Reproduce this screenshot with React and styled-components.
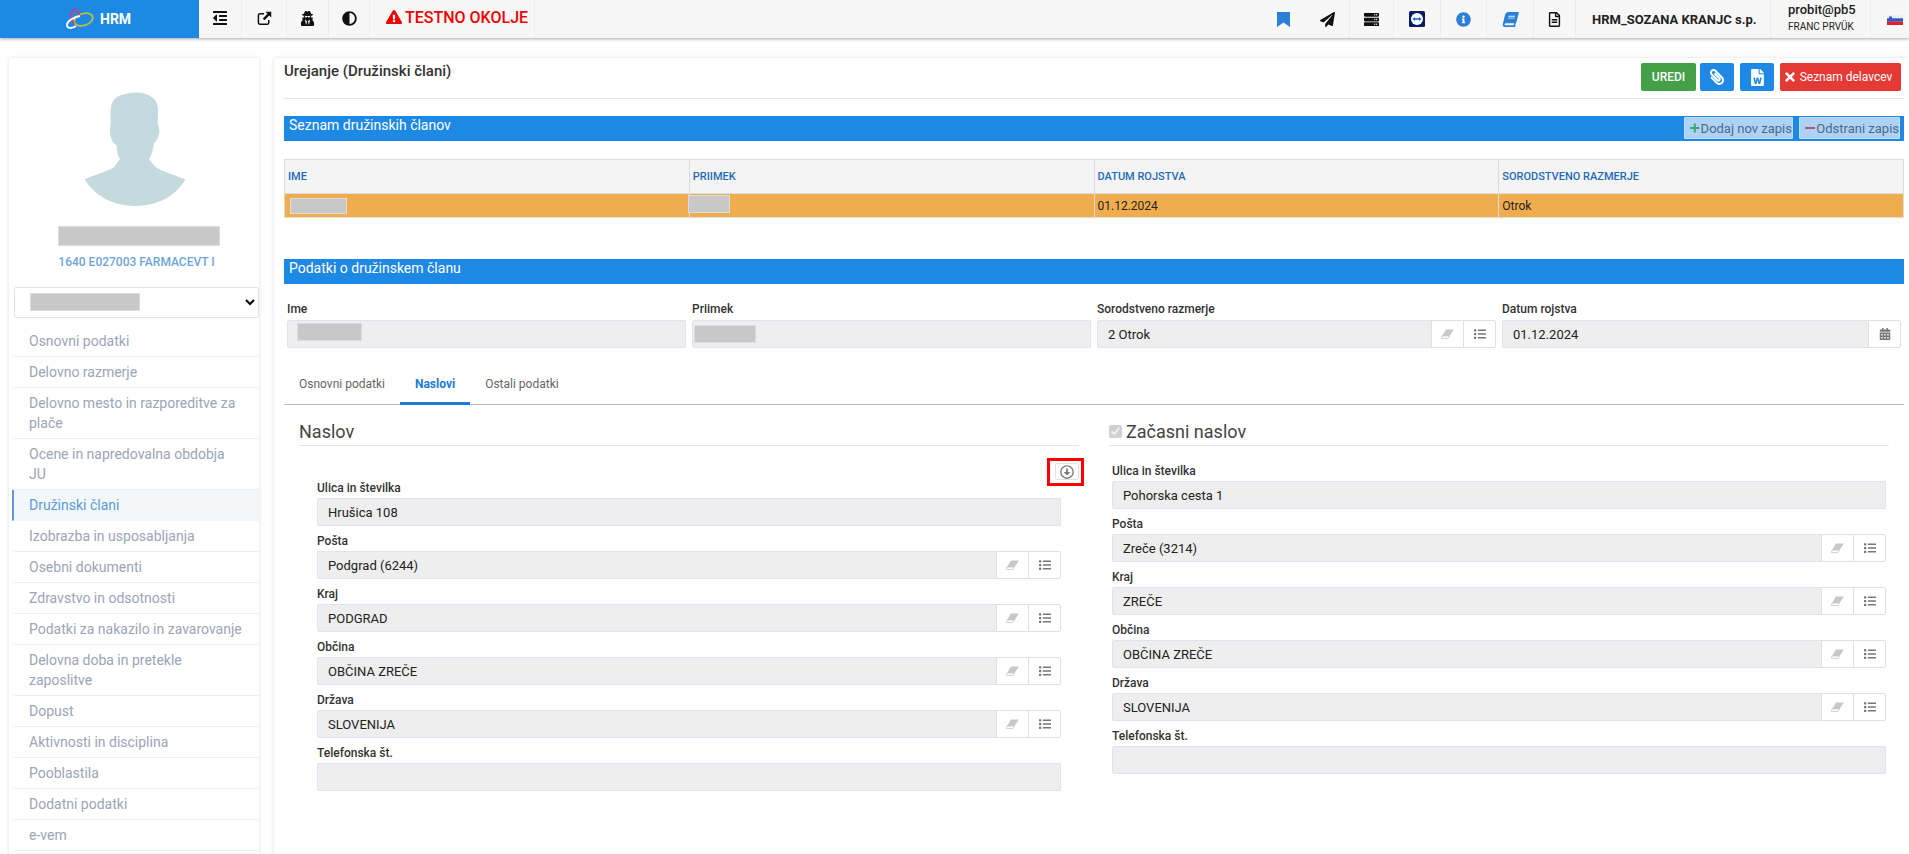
import React from "react";
import styled, { createGlobalStyle } from "styled-components";
import {
  FaOutdent, FaUserSecret, FaAdjust, FaExclamationTriangle,
  FaPaperPlane, FaServer, FaInfoCircle, FaBook, FaRegFileAlt, FaPaperclip, FaFileWord,
  FaTimes, FaPlus, FaMinus, FaList, FaCalendarAlt, FaRegArrowAltCircleDown,
} from "react-icons/fa";

const GlobalStyle = createGlobalStyle`
  html, body {
    margin: 0;
    height: 100%;
    overflow: hidden;
    background: #fff;
    font-family: Roboto, "Liberation Sans", sans-serif;
    font-size: 13px;
    color: #333;
  }
  * { box-sizing: border-box; }
`;

const Header = styled.header`
  display: flex;
  height: 38px;
  background: #f7f7f7;
  box-shadow: 0 1px 3px rgba(0, 0, 0, 0.35);
`;

const Brand = styled.div`
  width: 199px;
  display: flex;
  align-items: center;
  padding-left: 66px;
  gap: 6px;
  background: #1e88e5;
  color: #fff;
  font-size: 14px;
  font-weight: 700;
`;

const HeaderItem = styled.div`
  width: ${(p) => p.$w}px;
  display: flex;
  align-items: center;
  justify-content: center;
  padding-bottom: ${(p) => p.$lift || 0}px;
  border-right: 1px solid ${(p) => (p.$plain ? "transparent" : "#ececec")};
  color: ${(p) => p.$color || "#111"};
  font-size: ${(p) => p.$size || 15}px;
`;

const Spacer = styled.div`
  flex: 1;
`;

const Warning = styled.div`
  width: 165px;
  display: flex;
  align-items: center;
  gap: 3px;
  padding: 0 0 4px 16px;
  border-right: 1px solid #ececec;
  color: #f20000;
  font-size: 16px;
  font-weight: 500;
  white-space: nowrap;
`;

const Company = styled.div`
  width: 195px;
  display: flex;
  align-items: center;
  padding-left: 16px;
  border-right: 1px solid #ececec;
  color: #222;
  font-size: 13px;
  font-weight: 700;
  white-space: nowrap;
`;

const UserBox = styled.div`
  width: 100px;
  padding: 1px 0 0 17px;
  border-right: 1px solid #ececec;
  color: #222;
  font-size: 13px;
  font-weight: 500;
  line-height: 17px;
  small {
    display: block;
    font-size: 10px;
    font-weight: 400;
  }
`;

const BookIcon = styled(FaBook)`
  transform: skewX(-14deg);
`;

const FlagSvg = styled.svg`
  margin: 2px 0 0 10px;
`;

const Main = styled.main`
  display: flex;
  padding: 20px 0 0 9px;
`;

const Sidebar = styled.aside`
  width: 250px;
  flex: none;
  padding: 22px 0 0 5px;
  box-shadow: 0 0 4px rgba(0, 0, 0, 0.12);
  text-align: center;
`;

const Avatar = styled.svg`
  display: block;
  width: 150px;
  height: 140px;
  margin: 0 auto;
`;

const Redact = styled.span`
  display: block;
  width: ${(p) => p.$w}px;
  height: ${(p) => p.$h}px;
  background: #c8c8c8;
  border: 1px solid #dcdcdc;
`;

const NameBlock = styled(Redact)`
  margin: 6px 0 0 44px;
`;

const JobTitle = styled.div`
  margin-top: 8px;
  color: #6ea5d8;
  font-size: 12px;
  font-weight: 500;
  line-height: 16px;
`;

const SelectWrap = styled.div`
  position: relative;
  margin-top: 17px;
`;

const EmployeeSelect = styled.select`
  display: block;
  width: 100%;
  height: 31px;
  background: #fff;
  border: 1px solid #dde6f0;
  border-radius: 2px;
`;

const SelectMask = styled(Redact)`
  position: absolute;
  left: 16px;
  top: 6px;
`;

const SideList = styled.ul`
  list-style: none;
  margin: 8px 0 0;
  padding: 0;
  text-align: left;
`;

const SideItem = styled.li`
  padding: 5px 15px;
  border-bottom: 1px solid #eee;
  font-size: 14px;
  line-height: 20px;
  color: ${(p) => (p.$active ? "#5a9bd8" : "#9ba5b7")};
  ${(p) =>
    p.$active &&
    `
    margin-left: -2px;
    padding-left: 15px;
    border-left: 2px solid #5a9bd8;
    background: #f4f7fa;
    border-bottom-color: #f4f7fa;
  `}
`;

const Content = styled.section`
  flex: 1;
  min-width: 0;
  margin-left: 15px;
  padding: 0 5px 0 10px;
  height: 800px;
  box-shadow: 0 0 4px rgba(0, 0, 0, 0.12);
`;

const TitleRow = styled.div`
  display: flex;
  justify-content: space-between;
  height: 41px;
  padding: 5px 3px 0 0;
  border-bottom: 1px solid #e4e4e4;
`;

const PageTitle = styled.h1`
  margin: 0;
  font-size: 15px;
  font-weight: 500;
  line-height: 16px;
  color: #333;
`;

const ButtonRow = styled.div`
  display: flex;
  gap: 6px;
  height: 28px;
`;

const ActionButton = styled.button`
  width: ${(p) => p.$w}px;
  display: flex;
  align-items: center;
  justify-content: center;
  gap: 3px;
  padding: 0 ${(p) => p.$pr || 0}px 0 0;
  border: 0;
  border-radius: 2px;
  background: ${(p) => p.$bg};
  color: #fff;
  font: ${(p) => p.$weight || 400} 12px Roboto, sans-serif;
  white-space: nowrap;
  margin-left: ${(p) => p.$ml || 0}px;
`;

const ClipIcon = styled(FaPaperclip)`
  font-size: 16px;
  transform: scaleX(-1);
`;

const SectionBar = styled.div`
  display: flex;
  justify-content: space-between;
  height: 25px;
  margin-top: ${(p) => p.$mt}px;
  padding: 0 4px 0 5px;
  background: #1e88e5;
  color: #fff;
  font-size: 14px;
  line-height: 19px;
`;

const BarButtons = styled.div`
  display: flex;
  gap: 6px;
  padding-top: 1px;
`;

const BarButton = styled.button`
  display: flex;
  align-items: center;
  gap: 1px;
  width: ${(p) => p.$w}px;
  height: 22px;
  padding: 0 0 0 5px;
  background: #aed2f5;
  border: 1px solid #c2ddf7;
  border-radius: 1px;
  color: #4d6a88;
  font: 400 13px Roboto, sans-serif;
  white-space: nowrap;
  svg {
    color: ${(p) => p.$icon};
    font-size: 12px;
  }
`;

const Table = styled.table`
  width: 100%;
  margin-top: 18px;
  border-collapse: collapse;
  table-layout: fixed;
  th, td {
    padding: 0 3px;
    border: 1px solid #ddd;
    text-align: left;
  }
  th {
    height: 34px;
    background: #f4f4f4;
    color: #1f6cb5;
    font-size: 11px;
    font-weight: 500;
  }
  td {
    position: relative;
    height: 24px;
    background: #f0ad4e;
    color: #222;
    font-size: 12px;
  }
`;

const CellMask = styled(Redact)`
  position: absolute;
  left: ${(p) => p.$x}px;
  top: ${(p) => p.$y}px;
`;

const FormGrid = styled.div`
  display: grid;
  grid-template-columns: repeat(4, 1fr);
  margin-top: 11px;
`;

const Field = styled.div`
  padding: 0 3px;
`;

const Label = styled.label`
  display: block;
  padding-top: 7px;
  margin-bottom: 3px;
  color: #333;
  font-size: 12px;
  font-weight: 500;
  line-height: 15px;
`;

const InputGroup = styled.div`
  position: relative;
  display: flex;
  height: 28px;
`;

const Input = styled.input`
  flex: 1;
  min-width: 0;
  padding: 0 10px;
  background: #eee;
  border: 1px solid #dde6f0;
  border-radius: 2px 0 0 2px;
  color: #222;
  font: 400 13px Roboto, sans-serif;
  outline: 0;
`;

const Addon = styled.span`
  width: 33px;
  flex: none;
  display: flex;
  align-items: center;
  justify-content: center;
  margin-left: -1px;
  background: #fff;
  border: 1px solid #e0e0e0;
  color: #777;
  font-size: 12px;
  &:last-child { border-radius: 0 2px 2px 0; }
`;

const InputMask = styled(Redact)`
  position: absolute;
  left: ${(p) => p.$x}px;
  top: ${(p) => p.$y}px;
`;

const Eraser = () => (
  <svg width="13" height="10" viewBox="0 0 13 10">
    <path d="M5 .5H13L8.5 7H1Z" fill="#c8c8c8" />
    <path d="M1 7H8.5L7 9.5H.3Z" fill="none" stroke="#c8c8c8" strokeWidth=".8" />
  </svg>
);

const ExternalLink = () => (
  <svg width="15" height="15" viewBox="0 0 16 16" fill="none">
    <path d="M12.500 9.500v3A1.500 1.500 0 0 1 11 14H3A1.500 1.500 0 0 1 1.500 12.500v-8A1.500 1.500 0 0 1 3 3h4.500" stroke="#111" strokeWidth="1.600" />
    <path d="M9 .8h6.200V7L13 4.800 8 9.800 6.200 8 11.200 3Z" fill="#111" />
  </svg>
);

const BookmarkIcon = () => (
  <svg width="13" height="15" viewBox="0 0 13 15">
    <path d="M0 0H13V15L6.500 10.500 0 15Z" fill="#2a7fd6" />
  </svg>
);

const Tabs = styled.nav`
  display: flex;
  height: 40px;
  margin-top: 17px;
  border-bottom: 1px solid #bbb;
`;

const Tab = styled.a`
  height: 40px;
  padding: 9px 15px 0;
  border-bottom: 3px solid ${(p) => (p.$active ? "#1e7ad4" : "transparent")};
  color: ${(p) => (p.$active ? "#1e7ad4" : "#666")};
  font-size: 12px;
  font-weight: ${(p) => (p.$active ? 700 : 400)};
  line-height: 20px;
`;

const Panels = styled.div`
  display: grid;
  grid-template-columns: 1fr 1fr;
`;

const Panel = styled.div`
  padding: 15px 15px 0;
`;

const PanelTitle = styled.h2`
  display: flex;
  align-items: center;
  gap: 4px;
  height: 26px;
  margin: 0 0 10px;
  padding-bottom: 2px;
  border-bottom: 1px solid #e6e6e6;
  color: #444;
  font-size: 18px;
  font-weight: 400;
  line-height: 24px;
`;

const DisabledCheck = styled.input`
  width: 13px;
  height: 13px;
  margin: 0;
`;

const CopyRow = styled.div`
  display: flex;
  justify-content: flex-end;
  height: 17px;
  padding-top: 7px;
`;

const CopyButton = styled.span`
  position: relative;
  width: 24px;
  height: 17px;
  flex: none;
  display: flex;
  align-items: center;
  justify-content: center;
  background: #fff;
  border: 1px solid #e2e2e2;
  border-radius: 2px;
  color: #777;
  font-size: 14px;
  &::after {
    content: "";
    position: absolute;
    left: -9px;
    right: -6px;
    top: -6px;
    bottom: -7px;
    border: 3px solid #f00;
  }
`;

const AddressFields = styled.div`
  padding: 0 ${(p) => p.$inset}px;
  ${Label} {
    padding-top: 8px;
    margin-bottom: 2px;
  }
`;

const TeamViewer = () => (
  <svg width="16" height="16" viewBox="0 0 16 16">
    <rect width="16" height="16" rx="1.5" fill="#0c1a66" />
    <circle cx="8" cy="8" r="6" fill="#fff" />
    <path d="M3.500 8 6 6v1.200h4V6l2.500 2L10 10V8.800H6V10Z" fill="#0e5fd0" />
  </svg>
);

const Flag = () => (
  <FlagSvg width="16" height="10" viewBox="0 0 16 10">
    <rect width="16" height="3.400" fill="#eef0f6" />
    <rect y="3.300" width="16" height="3.400" fill="#2f56c8" />
    <rect y="6.600" width="16" height="3.400" fill="#e3202a" />
    <path d="M2 1.500h3v2.500l-1.500 1.200L2 4Z" fill="#3560cc" />
  </FlagSvg>
);

const Logo = () => (
  <svg width="28" height="20" viewBox="0 0 28 20" fill="none" strokeWidth="1.800">
    <ellipse cx="17.500" cy="10.500" rx="9.500" ry="6" transform="rotate(-18 17.500 10.500)" stroke="#b4c43a" />
    <path d="M8 15C4 9 4.500 2 7.500 1C10.500 0 12.500 4 14 8" stroke="#d9357a" />
    <path d="M14 7C8 8 1 12 1 16C1 19.500 6 20 10 17" stroke="#fff" />
  </svg>
);

const menuItems = [
  "Osnovni podatki",
  "Delovno razmerje",
  "Delovno mesto in razporeditve za plače",
  "Ocene in napredovalna obdobja JU",
  "Družinski člani",
  "Izobrazba in usposabljanja",
  "Osebni dokumenti",
  "Zdravstvo in odsotnosti",
  "Podatki za nakazilo in zavarovanje",
  "Delovna doba in pretekle zaposlitve",
  "Dopust",
  "Aktivnosti in disciplina",
  "Pooblastila",
  "Dodatni podatki",
  "e-vem",
];

const leftAddress = ["Hrušica 108", "Podgrad (6244)", "PODGRAD", "OBČINA ZREČE", "SLOVENIJA", ""];
const rightAddress = ["Pohorska cesta 1", "Zreče (3214)", "ZREČE", "OBČINA ZREČE", "SLOVENIJA", ""];
const addressLabels = ["Ulica in številka", "Pošta", "Kraj", "Občina", "Država", "Telefonska št."];

function PickerAddons() {
  return (
    <>
      <Addon><Eraser /></Addon>
      <Addon><FaList /></Addon>
    </>
  );
}

function Address({ values, inset }) {
  return (
    <AddressFields $inset={inset}>
      {addressLabels.map((label, i) => (
        <div key={label}>
          <Label>{label}</Label>
          <InputGroup>
            <Input readOnly value={values[i]} />
            {i > 0 && i < 5 && <PickerAddons />}
          </InputGroup>
        </div>
      ))}
    </AddressFields>
  );
}

export default function App() {
  return (
    <>
      <GlobalStyle />
      <Header>
        <Brand><Logo />HRM</Brand>
        <HeaderItem $w={43} $lift={2} $size={16}><FaOutdent /></HeaderItem>
        <HeaderItem $w={45} $lift={2}><ExternalLink /></HeaderItem>
        <HeaderItem $w={42} $lift={2}><FaUserSecret /></HeaderItem>
        <HeaderItem $w={41} $lift={2}><FaAdjust /></HeaderItem>
        <Warning><FaExclamationTriangle />TESTNO OKOLJE</Warning>
        <Spacer />
        <HeaderItem $w={43} $plain><BookmarkIcon /></HeaderItem>
        <HeaderItem $w={45}><FaPaperPlane /></HeaderItem>
        <HeaderItem $w={44}><FaServer /></HeaderItem>
        <HeaderItem $w={47}><TeamViewer /></HeaderItem>
        <HeaderItem $w={46} $color="#2a7fd6"><FaInfoCircle /></HeaderItem>
        <HeaderItem $w={47} $color="#2a7fd6"><BookIcon /></HeaderItem>
        <HeaderItem $w={42}><FaRegFileAlt /></HeaderItem>
        <Company>HRM_SOZANA KRANJC s.p.</Company>
        <UserBox>probit@pb5<small>FRANC PRVÜK</small></UserBox>
        <HeaderItem $w={38} $plain><Flag /></HeaderItem>
      </Header>

      <Main>
        <Sidebar>
          <Avatar viewBox="4 0 450 420">
            <path
              fill="#c4dade"
              d="M72 298C110 282 150 270 160 262L178 238C172 225 168 215 168 195C155 190 147 170 148 150C148 140 152 128 150 115C148 85 152 60 170 50C195 40 225 32 255 42C275 50 290 60 292 85C293 105 290 120 292 135C300 150 297 175 280 190C277 205 275 225 265 238L285 262C300 272 340 285 374 298C345 350 290 378 222 378C155 378 100 345 72 298Z"
            />
          </Avatar>
          <NameBlock $w={162} $h={20} />
          <JobTitle>1640 E027003 FARMACEVT I</JobTitle>
          <SelectWrap>
            <EmployeeSelect><option></option></EmployeeSelect>
            <SelectMask $w={110} $h={18} />
          </SelectWrap>
          <SideList>
            {menuItems.map((item) => (
              <SideItem key={item} $active={item === "Družinski člani"}>{item}</SideItem>
            ))}
          </SideList>
        </Sidebar>

        <Content>
          <TitleRow>
            <PageTitle>Urejanje (Družinski člani)</PageTitle>
            <ButtonRow>
              <ActionButton $w={55} $bg="#43a047" $weight={500}>UREDI</ActionButton>
              <ActionButton $w={34} $bg="#1e88e5" $ml={-2}><ClipIcon /></ActionButton>
              <ActionButton $w={34} $bg="#1e88e5"><FaFileWord size={17} /></ActionButton>
              <ActionButton $w={121} $bg="#e53935" $pr={6}><FaTimes size={14} />Seznam delavcev</ActionButton>
            </ButtonRow>
          </TitleRow>

          <SectionBar $mt={17}>
            Seznam družinskih članov
            <BarButtons>
              <BarButton $w={109} $icon="#3fa37a"><FaPlus />Dodaj nov zapis</BarButton>
              <BarButton $w={101} $icon="#b5566e"><FaMinus />Odstrani zapis</BarButton>
            </BarButtons>
          </SectionBar>

          <Table>
            <thead>
              <tr>
                <th>IME</th>
                <th>PRIIMEK</th>
                <th>DATUM ROJSTVA</th>
                <th>SORODSTVENO RAZMERJE</th>
              </tr>
            </thead>
            <tbody>
              <tr>
                <td><CellMask $x={5} $y={4} $w={57} $h={16} /></td>
                <td><CellMask $x={-2} $y={1} $w={42} $h={18} /></td>
                <td>01.12.2024</td>
                <td>Otrok</td>
              </tr>
            </tbody>
          </Table>

          <SectionBar $mt={41}>Podatki o družinskem članu</SectionBar>

          <FormGrid>
            <Field>
              <Label>Ime</Label>
              <InputGroup>
                <Input readOnly />
                <InputMask $x={10} $y={3} $w={65} $h={18} />
              </InputGroup>
            </Field>
            <Field>
              <Label>Priimek</Label>
              <InputGroup>
                <Input readOnly />
                <InputMask $x={2} $y={5} $w={62} $h={18} />
              </InputGroup>
            </Field>
            <Field>
              <Label>Sorodstveno razmerje</Label>
              <InputGroup>
                <Input readOnly value="2 Otrok" />
                <PickerAddons />
              </InputGroup>
            </Field>
            <Field>
              <Label>Datum rojstva</Label>
              <InputGroup>
                <Input readOnly value="01.12.2024" />
                <Addon><FaCalendarAlt /></Addon>
              </InputGroup>
            </Field>
          </FormGrid>

          <Tabs>
            <Tab>Osnovni podatki</Tab>
            <Tab $active>Naslovi</Tab>
            <Tab>Ostali podatki</Tab>
          </Tabs>

          <Panels>
            <Panel>
              <PanelTitle>Naslov</PanelTitle>
              <CopyRow>
                <CopyButton><FaRegArrowAltCircleDown /></CopyButton>
              </CopyRow>
              <Address values={leftAddress} inset={18} />
            </Panel>
            <Panel>
              <PanelTitle>
                <DisabledCheck type="checkbox" checked disabled readOnly />
                Začasni naslov
              </PanelTitle>
              <Address values={rightAddress} inset={3} />
            </Panel>
          </Panels>
        </Content>
      </Main>
    </>
  );
}
